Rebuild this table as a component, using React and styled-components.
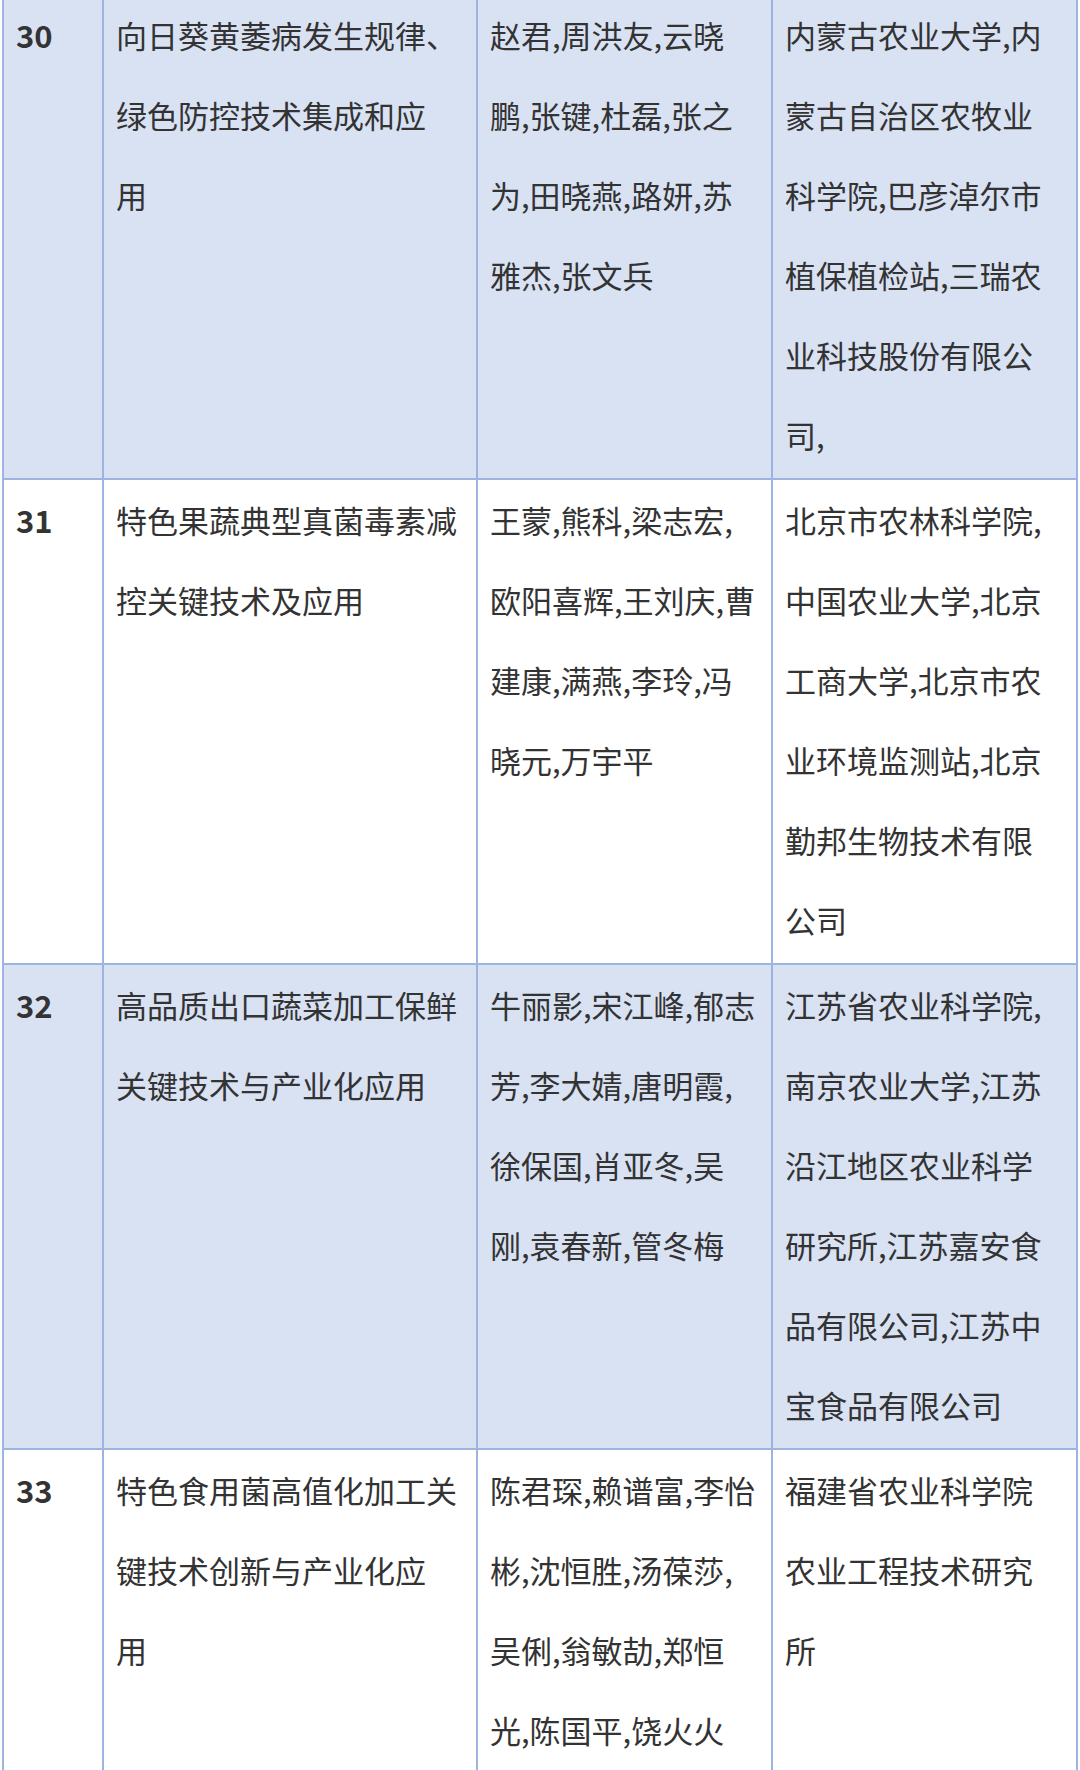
import React from "react";
import styled, { createGlobalStyle } from "styled-components";

const GlobalStyle = createGlobalStyle`
  html, body {
    margin: 0;
    padding: 0;
    background: #fff;
  }
  body {
    font-family: "Noto Sans CJK SC", "Noto Sans", sans-serif;
    color: #333;
  }
`;

const Page = styled.div`
  width: 1080px;
  height: 1770px;
  overflow: hidden;
  background: #fff;
`;

const Table = styled.table`
  border-collapse: collapse;
  table-layout: fixed;
  width: 1076px;
  margin: -7px 0 0 2px; /* top of row 30 is just above the shot */
`;

const Row = styled.tr`
  background-color: ${(p) => (p.$shaded ? "#d9e2f3" : "#ffffff")};
`;

const Cell = styled.td`
  border: 2px solid #9db4e0;
  vertical-align: top;
  padding: 0 6px 3px 12px;
  font-size: 31px;
  line-height: 80px;
  color: #333;
`;

const NumCell = styled(Cell)`
  font-weight: 700;
`;

const Line = styled.span`
  display: block;
  white-space: nowrap;
`;

const rows = [
  {
    no: "30",
    title: ["向日葵黄萎病发生规律、", "绿色防控技术集成和应", "用"],
    people: ["赵君,周洪友,云晓", "鹏,张键,杜磊,张之", "为,田晓燕,路妍,苏", "雅杰,张文兵"],
    units: [
      "内蒙古农业大学,内",
      "蒙古自治区农牧业",
      "科学院,巴彦淖尔市",
      "植保植检站,三瑞农",
      "业科技股份有限公",
      "司,",
    ],
  },
  {
    no: "31",
    title: ["特色果蔬典型真菌毒素减", "控关键技术及应用"],
    people: ["王蒙,熊科,梁志宏,", "欧阳喜辉,王刘庆,曹", "建康,满燕,李玲,冯", "晓元,万宇平"],
    units: [
      "北京市农林科学院,",
      "中国农业大学,北京",
      "工商大学,北京市农",
      "业环境监测站,北京",
      "勤邦生物技术有限",
      "公司",
    ],
  },
  {
    no: "32",
    title: ["高品质出口蔬菜加工保鲜", "关键技术与产业化应用"],
    people: ["牛丽影,宋江峰,郁志", "芳,李大婧,唐明霞,", "徐保国,肖亚冬,吴", "刚,袁春新,管冬梅"],
    units: [
      "江苏省农业科学院,",
      "南京农业大学,江苏",
      "沿江地区农业科学",
      "研究所,江苏嘉安食",
      "品有限公司,江苏中",
      "宝食品有限公司",
    ],
  },
  {
    no: "33",
    title: ["特色食用菌高值化加工关", "键技术创新与产业化应", "用"],
    people: ["陈君琛,赖谱富,李怡", "彬,沈恒胜,汤葆莎,", "吴俐,翁敏劼,郑恒", "光,陈国平,饶火火"],
    units: ["福建省农业科学院", "农业工程技术研究", "所"],
  },
];

const Lines = ({ items }) => items.map((t, i) => <Line key={i}>{t}</Line>);

export default function App() {
  return (
    <Page>
      <GlobalStyle />
      <Table>
        <colgroup>
          <col style={{ width: 100 }} />
          <col style={{ width: 374 }} />
          <col style={{ width: 295 }} />
          <col style={{ width: 305 }} />
        </colgroup>
        <tbody>
          {rows.map((r, i) => (
            <Row key={r.no} $shaded={i % 2 === 0}>
              <NumCell>{r.no}</NumCell>
              <Cell>
                <Lines items={r.title} />
              </Cell>
              <Cell>
                <Lines items={r.people} />
              </Cell>
              <Cell>
                <Lines items={r.units} />
              </Cell>
            </Row>
          ))}
        </tbody>
      </Table>
    </Page>
  );
}
